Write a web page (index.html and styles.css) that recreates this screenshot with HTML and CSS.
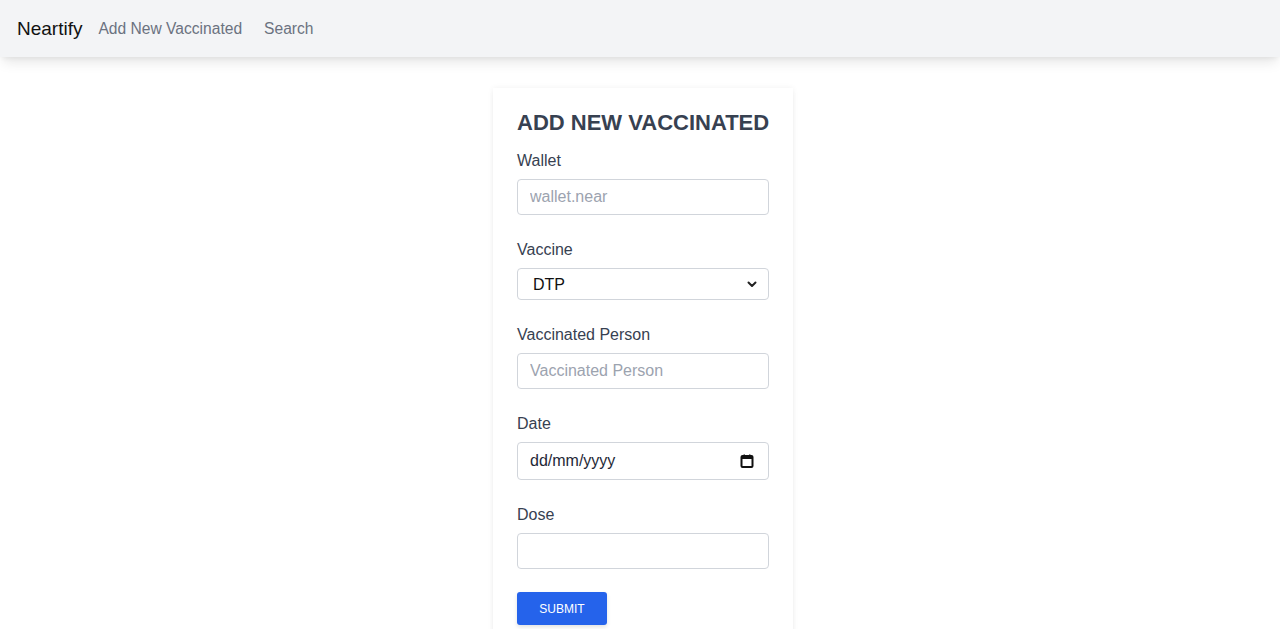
FILE: index.html
```html
<!DOCTYPE html>
<html lang="en">
<head>
<meta charset="utf-8">
<title>Neartify</title>
<link rel="stylesheet" href="styles.css">
</head>
<body>
<nav class="navbar">
  <a class="brand" href="#">Neartify</a>
  <a class="nav-link" href="#">Add New Vaccinated</a>
  <a class="nav-link search" href="#">Search</a>
</nav>
<main class="main">
  <form class="card">
    <h1 class="title">ADD NEW VACCINATED</h1>
    <div class="field">
      <label class="label">Wallet</label>
      <input class="input" type="text" placeholder="wallet.near">
    </div>
    <div class="field">
      <label class="label">Vaccine</label>
      <div class="select-wrap">
        <select class="select"><option>DTP</option></select>
        <svg class="chev" width="10" height="7" viewBox="0 0 10 7"><path d="M1.5 1.5 L5 5 L8.5 1.5" fill="none" stroke="#222" stroke-width="2" stroke-linecap="round" stroke-linejoin="round"/></svg>
      </div>
    </div>
    <div class="field">
      <label class="label">Vaccinated Person</label>
      <input class="input" type="text" placeholder="Vaccinated Person">
    </div>
    <div class="field">
      <label class="label">Date</label>
      <div class="select-wrap">
        <input class="input date" type="text" placeholder="dd/mm/yyyy">
        <svg class="cal" width="14" height="14" viewBox="0 0 14 14"><rect x="1.5" y="2" width="11" height="11" rx="1" fill="none" stroke="#111" stroke-width="2"/><rect x="1.5" y="2" width="11" height="3" fill="#111"/><rect x="3.5" y="0.5" width="1.5" height="2" fill="#111"/><rect x="9" y="0.5" width="1.5" height="2" fill="#111"/></svg>
      </div>
    </div>
    <div class="field">
      <label class="label">Dose</label>
      <input class="input" type="text">
    </div>
    <button class="btn" type="button">SUBMIT</button>
  </form>
</main>
</body>
</html>
```

FILE: styles.css
```css
* { box-sizing: border-box; }
html, body { margin: 0; padding: 0; }
body {
  font-family: "Liberation Sans", Arial, sans-serif;
  background: #ffffff;
  color: #374151;
}
.navbar {
  height: 57px;
  background: #f3f4f6;
  display: flex;
  align-items: center;
  padding: 0 17px;
  box-shadow: 0 8px 12px -3px rgba(0,0,0,0.10), 0 3px 5px -2px rgba(0,0,0,0.06);
  position: relative;
}
.brand {
  font-size: 19px;
  color: #111111;
  text-decoration: none;
  margin-right: 16px;
}
.nav-link {
  font-size: 15.6px;
  color: #6b7280;
  text-decoration: none;
  margin-right: 22px;
}
.main {
  display: flex;
  justify-content: center;
  padding-top: 31px;
  padding-left: 6px;
}
.card {
  width: 300px;
  padding: 24px 24px 0 24px;
  background: #fff;
  box-shadow: 0 0 6px rgba(0,0,0,0.06), 0 4px 6px -1px rgba(0,0,0,0.05);
  height: 560px;
}
.title {
  margin: 0 0 15px 0;
  font-size: 22px;
  line-height: 22px;
  font-weight: 700;
  color: #374151;
  white-space: nowrap;
}
.field {
  display: flex;
  flex-direction: column;
  margin-bottom: 23px;
}
.label {
  font-size: 16px;
  line-height: 24px;
  color: #374151;
  margin-bottom: 6px;
}
.input {
  width: 252px;
  height: 36px;
  border: 1px solid #d1d5db;
  border-radius: 4px;
  padding: 0 12px;
  font-family: inherit;
  font-size: 16px;
  color: #111;
  outline: none;
}
.input::placeholder { color: #9ca3af; }
.select-wrap { position: relative; width: 252px; }
.select {
  -webkit-appearance: none;
  appearance: none;
  width: 252px;
  height: 32px;
  border: 1px solid #d1d5db;
  border-radius: 4px;
  padding: 0 15px;
  font-family: inherit;
  font-size: 16px;
  color: #111;
  background: #fff;
}
.chev { position: absolute; right: 12px; top: 13px; }
.date { height: 38px; padding-left: 12px; }
.date::placeholder { color: #1f2937; }
.cal { position: absolute; right: 15px; top: 12px; }
.btn {
  width: 90px;
  height: 33px;
  background: #2563eb;
  color: #fff;
  border: none;
  border-radius: 3px;
  font-family: inherit;
  font-size: 12px;
  font-weight: 500;
  box-shadow: 0 2px 4px rgba(0,0,0,0.12);
}
```
